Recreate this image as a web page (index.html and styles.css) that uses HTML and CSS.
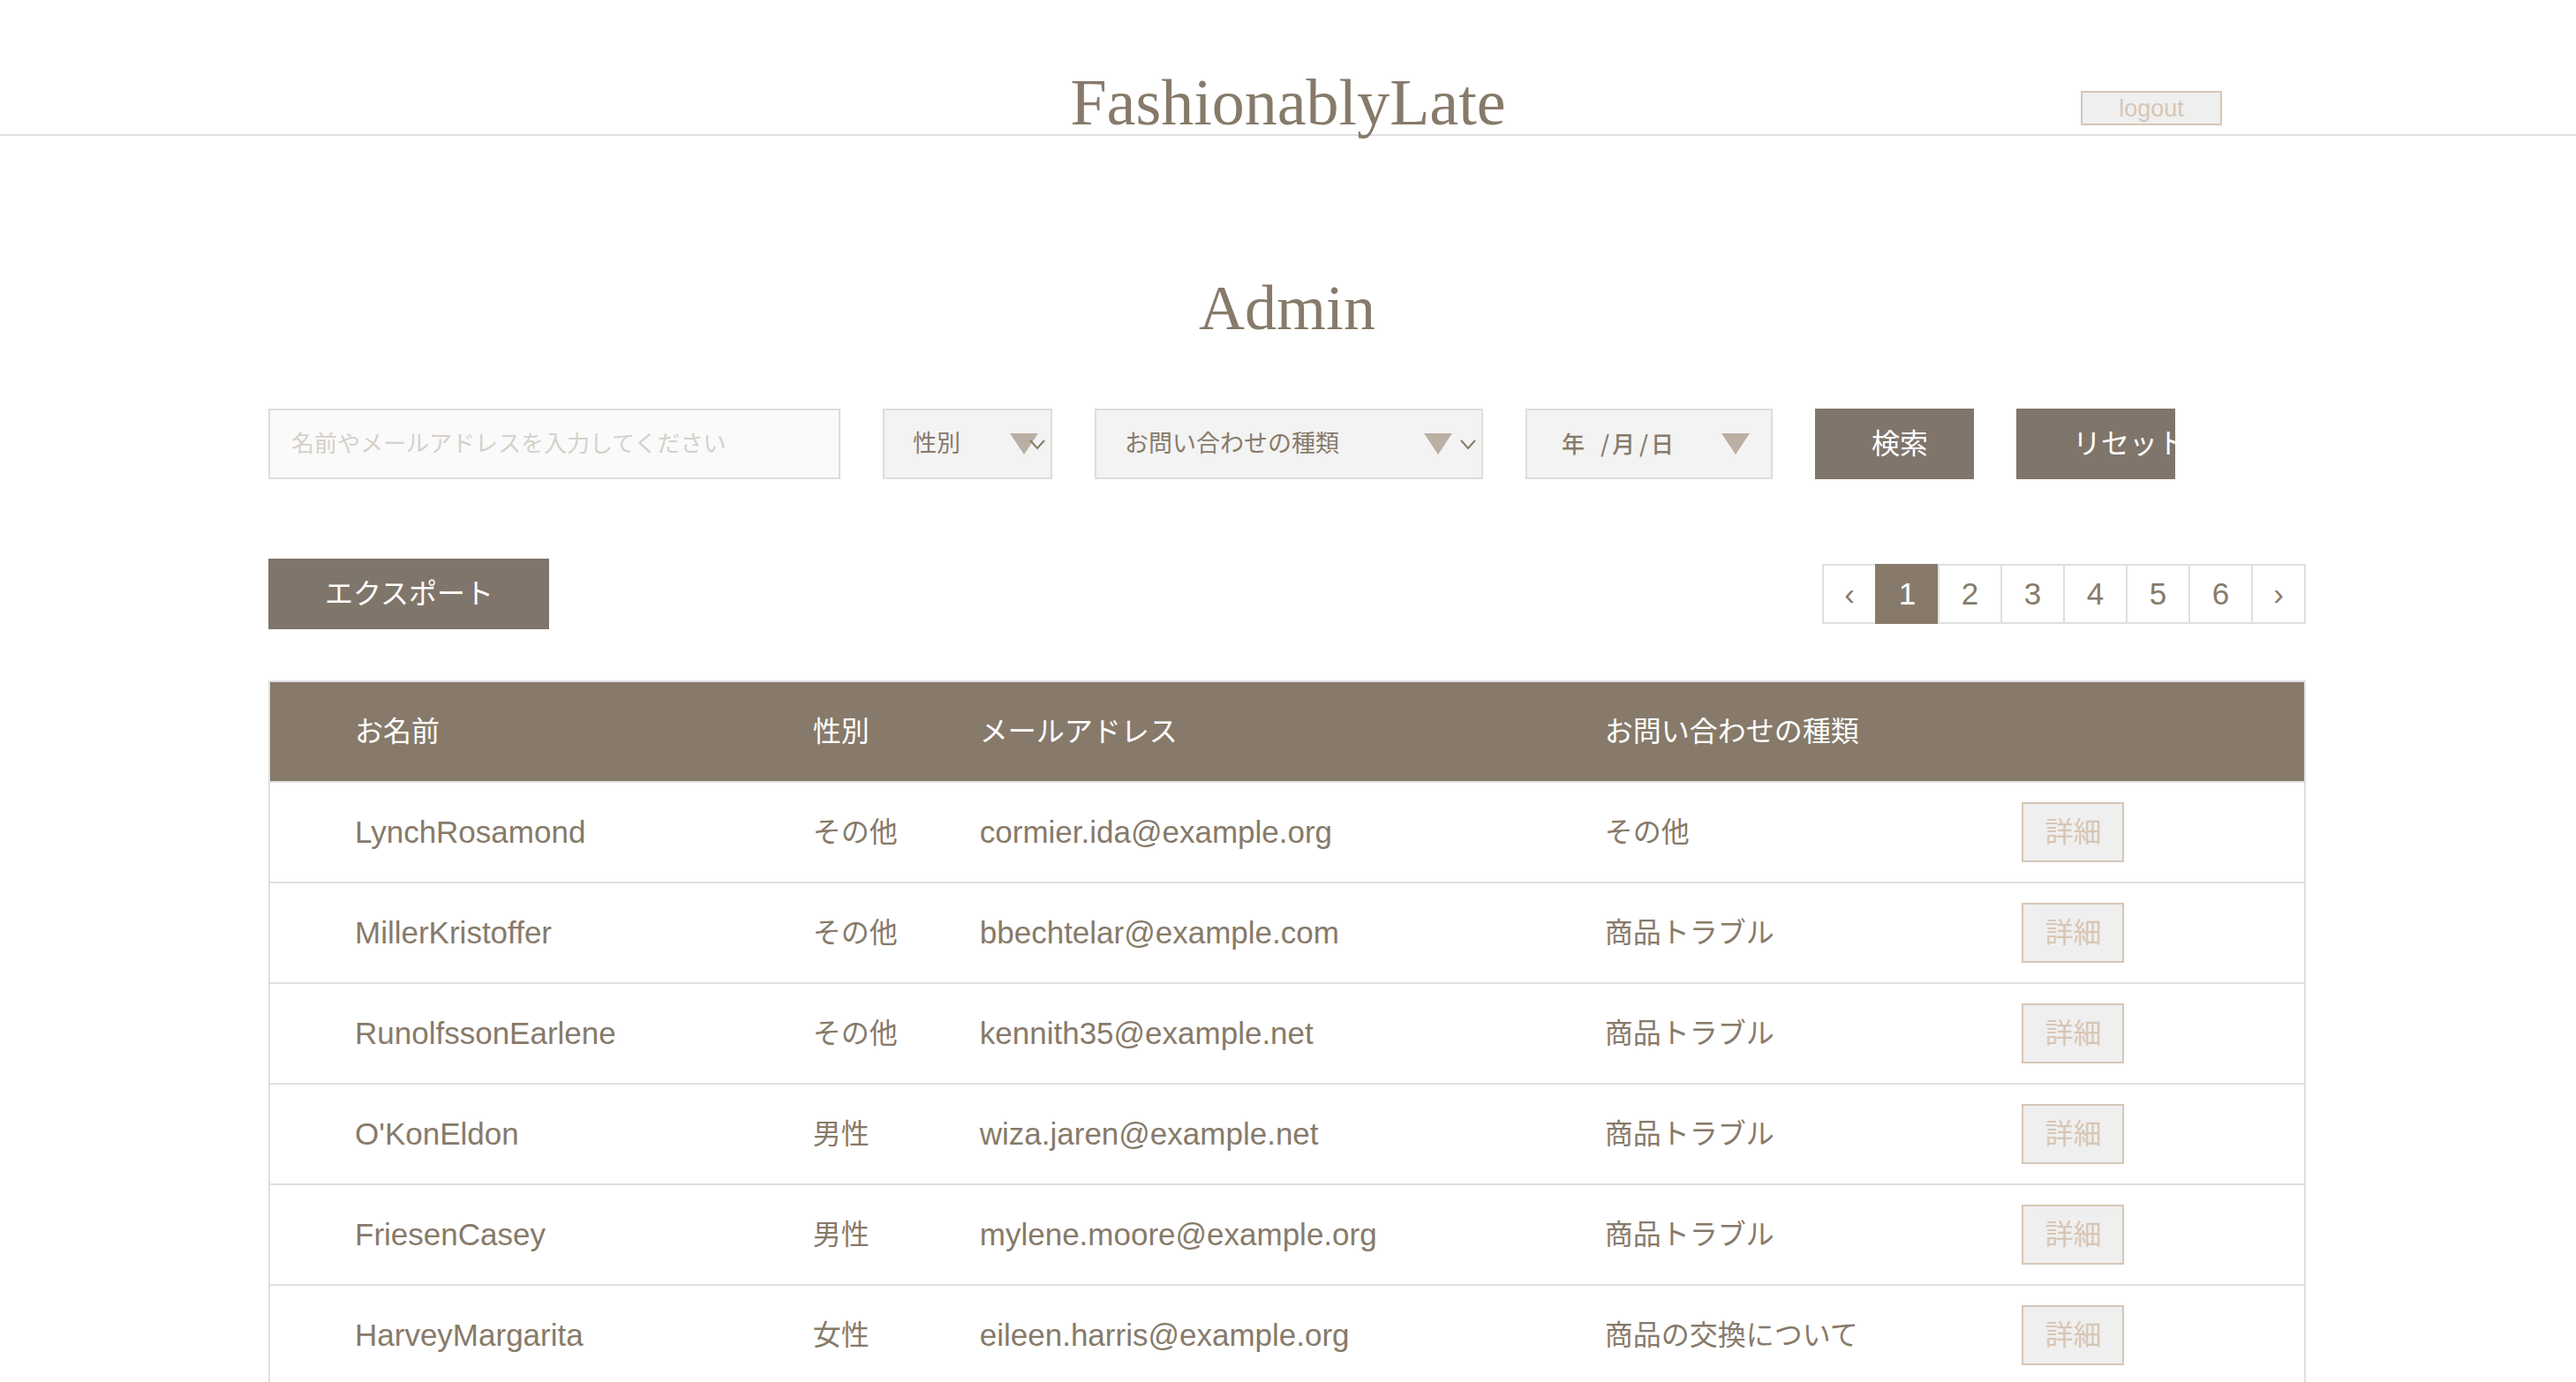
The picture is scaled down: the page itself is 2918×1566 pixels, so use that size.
FILE: index.html
```html
<!DOCTYPE html>
<html lang="ja">
<head>
<meta charset="utf-8">
<title>FashionablyLate</title>
<link rel="stylesheet" href="styles.css">
</head>
<body>
<header class="header">
  <h1 class="header__title">FashionablyLate</h1>
  <button class="header__logout" type="button">logout</button>
</header>
<main class="admin">
  <h2 class="admin__heading">Admin</h2>
  <form class="search">
    <input class="search__keyword" type="text" aria-label="名前やメールアドレス" placeholder="名前やメールアドレスを入力してください">
    <div class="field field--gender">
      <select class="field__select" aria-label="性別">
        <option>性別</option>
      </select>
      <svg class="field__triangle" viewBox="0 0 32 24" aria-hidden="true"><path d="M0 0h32L16 24z"/></svg>
      <svg class="field__chevron" viewBox="0 0 18 12" aria-hidden="true"><path d="M1 1l8 9 8-9"/></svg>
    </div>
    <div class="field field--category">
      <select class="field__select" aria-label="お問い合わせの種類">
        <option>お問い合わせの種類</option>
      </select>
      <svg class="field__triangle" viewBox="0 0 32 24" aria-hidden="true"><path d="M0 0h32L16 24z"/></svg>
      <svg class="field__chevron" viewBox="0 0 18 12" aria-hidden="true"><path d="M1 1l8 9 8-9"/></svg>
    </div>
    <div class="field field--date">
      <div class="date">
        <input class="date__part date__part--year" type="text" aria-label="年" placeholder="年">
        <span class="date__slash">/</span>
        <input class="date__part" type="text" aria-label="月" placeholder="月">
        <span class="date__slash">/</span>
        <input class="date__part" type="text" aria-label="日" placeholder="日">
      </div>
      <svg class="field__triangle" viewBox="0 0 32 24" aria-hidden="true"><path d="M0 0h32L16 24z"/></svg>
    </div>
    <button class="button button--search" type="submit">検索</button>
    <button class="button button--search" type="reset">リセット</button>
  </form>
  <div class="tools">
    <button class="button button--export" type="button">エクスポート</button>
    <nav class="pagination" aria-label="ページ">
      <a class="pagination__link pagination__link--prev" href="#">‹</a>
      <a class="pagination__link pagination__link--active" href="#">1</a>
      <a class="pagination__link" href="#">2</a>
      <a class="pagination__link" href="#">3</a>
      <a class="pagination__link" href="#">4</a>
      <a class="pagination__link" href="#">5</a>
      <a class="pagination__link" href="#">6</a>
      <a class="pagination__link pagination__link--next" href="#">›</a>
    </nav>
  </div>
  <table class="contacts">
    <colgroup>
      <col class="contacts__col-name">
      <col class="contacts__col-gender">
      <col class="contacts__col-email">
      <col class="contacts__col-category">
      <col>
    </colgroup>
    <thead>
      <tr><th>お名前</th><th>性別</th><th>メールアドレス</th><th>お問い合わせの種類</th><th></th></tr>
    </thead>
    <tbody>
      <tr><td class="latin">LynchRosamond</td><td>その他</td><td class="latin">cormier.ida@example.org</td><td>その他</td><td><button class="detail" type="button">詳細</button></td></tr>
      <tr><td class="latin">MillerKristoffer</td><td>その他</td><td class="latin">bbechtelar@example.com</td><td>商品トラブル</td><td><button class="detail" type="button">詳細</button></td></tr>
      <tr><td class="latin">RunolfssonEarlene</td><td>その他</td><td class="latin">kennith35@example.net</td><td>商品トラブル</td><td><button class="detail" type="button">詳細</button></td></tr>
      <tr><td class="latin">O'KonEldon</td><td>男性</td><td class="latin">wiza.jaren@example.net</td><td>商品トラブル</td><td><button class="detail" type="button">詳細</button></td></tr>
      <tr><td class="latin">FriesenCasey</td><td>男性</td><td class="latin">mylene.moore@example.org</td><td>商品トラブル</td><td><button class="detail" type="button">詳細</button></td></tr>
      <tr><td class="latin">HarveyMargarita</td><td>女性</td><td class="latin">eileen.harris@example.org</td><td>商品の交換について</td><td><button class="detail" type="button">詳細</button></td></tr>
    </tbody>
  </table>
</main>
</body>
</html>
```

FILE: styles.css
```css
:root {
  --brown: #877a6a;
  --line: #dfdfdf;
  --field-line: #e0dcd8;
  --sand: #d7c6b5;
  --sans: "Liberation Sans", "Noto Sans CJK JP", sans-serif;
  --serif: "Liberation Serif", serif;
}

* {
  box-sizing: border-box;
}

body {
  margin: 0;
  height: 100vh;
  overflow: hidden;
  background: #fff;
  color: var(--brown);
  font-family: var(--sans);
  font-size: 32px;
}

button,
input,
select {
  margin: 0;
  border-radius: 0;
  font-family: inherit;
  color: inherit;
}

/* Header */
.header {
  display: grid;
  grid-template-columns: 1fr auto 1fr;
  align-items: end;
  padding: 80px 401px 0;
  border-bottom: 2px solid var(--line);
}

.header__title {
  grid-column: 2;
  margin: 0;
  font: 400 74px/72px var(--serif);
}

.header__logout {
  justify-self: end;
  width: 160px;
  height: 39px;
  margin-bottom: 10px;
  padding: 0;
  border: 2px solid var(--sand);
  background: #efefef;
  color: var(--sand);
  font-size: 27px;
  line-height: 32px;
}

.admin {
  padding: 0 306px 0 304px;
}

.admin__heading {
  margin: 159px 0 78px;
  font: 400 72px/72px var(--serif);
  text-align: center;
}

/* Search form */
.search {
  display: flex;
  gap: 48px;
  height: 80px;
  margin-bottom: 90px;
  padding-right: 148px;
}

.search__keyword {
  flex: 1;
  min-width: 0;
  padding: 0 24px;
  border: 2px solid var(--field-line);
  background: #fafafa;
  font-size: 26px;
}

.search__keyword::placeholder {
  color: #d6d0c9;
}

.field {
  position: relative;
  border: 2px solid var(--field-line);
  background: #f3f3f3;
  font-size: 26px;
}

.field--gender {
  width: 192px;
}

.field--category {
  width: 440px;
}

.field--date {
  width: 280px;
}

.field__select {
  appearance: none;
  display: block;
  width: 100%;
  height: 100%;
  padding: 0 32px;
  border: 0;
  background: transparent;
  font-size: 27px;
}

.field__triangle {
  position: absolute;
  top: 26px;
  right: 24px;
  width: 32px;
  height: 24px;
  fill: #bbafa4;
}

.field--gender .field__triangle {
  right: 14px;
}

.field--category .field__triangle {
  right: 33px;
}

.field__chevron {
  position: absolute;
  top: 33px;
  right: 6px;
  width: 18px;
  height: 12px;
  fill: none;
  stroke: var(--brown);
  stroke-width: 2;
}

.date {
  display: flex;
  align-items: center;
  height: 100%;
  padding: 0 0 4px 39px;
  font-family: "Noto Sans CJK JP", sans-serif;
  font-weight: 500;
}

.date__part {
  width: 28px;
  padding: 0;
  border: 0;
  background: transparent;
  font-size: 26px;
  font-weight: 500;
}

.date__part--year {
  width: 41px;
}

.date__part::placeholder {
  color: var(--brown);
}

.date__slash {
  width: 16px;
  text-align: center;
}

.button {
  height: 80px;
  padding: 0 64px;
  border: 0;
  background: #80756a;
  color: #fff;
  font-size: 32px;
  line-height: 80px;
  text-align: left;
  white-space: nowrap;
  overflow: hidden;
}

.button--search {
  width: 180px;
}

.button--export {
  width: 318px;
}

/* Export and pagination */
.tools {
  display: flex;
  align-items: center;
  justify-content: space-between;
  margin-bottom: 58px;
}

.pagination {
  display: flex;
}

.pagination__link {
  width: 71px;
  border: 2px solid var(--line);
  border-right: 0;
  color: var(--brown);
  font-size: 35px;
  line-height: 64px;
  text-align: center;
  text-decoration: none;
}

.pagination__link--prev {
  width: 60px;
}

.pagination__link--next {
  width: 62px;
  border-right: 2px solid var(--line);
}

.pagination__link--active {
  border-color: var(--brown);
  background: var(--brown);
  color: #fff;
}

/* Contact list */
.contacts {
  width: 100%;
  border: 2px solid var(--line);
  border-collapse: collapse;
  table-layout: fixed;
}

.contacts__col-name {
  width: 26.7%;
}

.contacts__col-gender {
  width: 8.2%;
}

.contacts__col-email {
  width: 30.7%;
}

.contacts__col-category {
  width: 20.5%;
}

.contacts tr {
  border-bottom: 2px solid var(--line);
}

.contacts thead {
  background: var(--brown);
  color: #fff;
}

.contacts th,
.contacts td {
  padding: 22px 0;
  font-size: 32px;
  font-weight: 400;
  line-height: 68px;
  text-align: left;
}

.contacts th:first-child,
.contacts td:first-child {
  padding-left: 96px;
}

.contacts td.latin {
  font-size: 35px;
}

.detail {
  display: block;
  width: 116px;
  height: 68px;
  padding: 0;
  border: 2px solid var(--sand);
  background: #efefef;
  color: var(--sand);
  font-size: 32px;
  line-height: 64px;
}
```
